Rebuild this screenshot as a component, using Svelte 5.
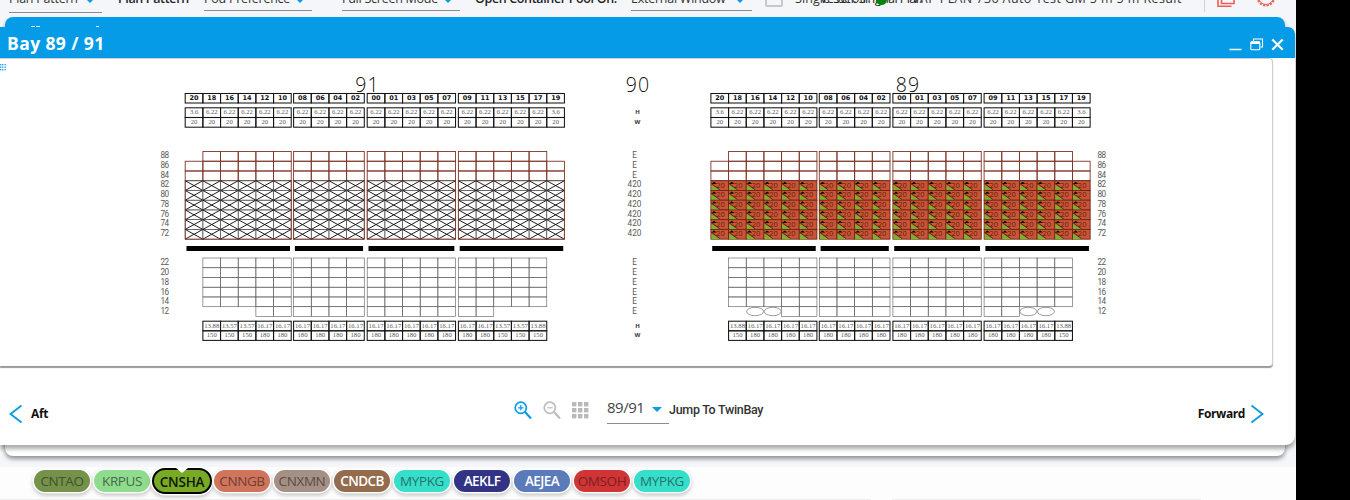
<script>
  const groups = [
    { x: 185.2, names: ['20', '18', '16', '14', '12', '10'] },
    { x: 293.6, names: ['08', '06', '04', '02'] },
    { x: 367.2, names: ['00', '01', '03', '05', '07'] },
    { x: 458.4, names: ['09', '11', '13', '15', '17', '19'] }
  ];
  const CW = 17.67;
  const RH = 9.74;
  const TOP = 151.5;
  const LOW = 258;
  const cols = groups.flatMap((g) => g.names.map((name, i) => ({ name, x: g.x + i * CW })));
  const inner = cols.slice(1, 20);
  const range = (n) => Array.from({ length: n }, (_, i) => i);
  const upper = ['88', '86', '84', '82', '80', '78', '76', '74', '72'];
  const lower = ['22', '20', '18', '16', '14', '12'];

  const bays = [
    { dx: 0, title: '91', tx: 367, loaded: false, first: 4, last: 16, round: [], light: [1, 2, 3, 17, 18, 19], mid: '13.57' },
    { dx: 525.7, title: '89', tx: 907.5, loaded: true, first: 2, last: 18, round: [2, 3, 17, 18], light: [1, 19], mid: '16.17' }
  ];
  const limit = (bay, i) => (i === 1 || i === 19 ? '13.88' : bay.light.includes(i) ? bay.mid : '16.17');

  const ports = [
    { code: 'CNTAO', bg: '#74924a', fg: '#42502f' },
    { code: 'KRPUS', bg: '#90dc8e', fg: '#456a48' },
    { code: 'CNSHA', bg: '#78aa25', fg: '#10180a', active: true },
    { code: 'CNNGB', bg: '#d0745b', fg: '#713e35' },
    { code: 'CNXMN', bg: '#a49085', fg: '#5a4b46' },
    { code: 'CNDCB', bg: '#956b4d', fg: '#ffffff', strong: true },
    { code: 'MYPKG', bg: '#36dfc9', fg: '#28736c' },
    { code: 'AEKLF', bg: '#333386', fg: '#ffffff', strong: true },
    { code: 'AEJEA', bg: '#5b7aba', fg: '#ffffff', strong: true },
    { code: 'OMSOH', bg: '#d03434', fg: '#7b2024' },
    { code: 'MYPKG', bg: '#36dfc9', fg: '#28736c' }
  ];
</script>

<div class="screen">
  <header class="toolbar">
    <div class="select low" style:width="93px"><span style:width="70px">Plan Pattern</span><i></i></div>
    <b style:width="86px">Plan Pattern</b>
    <div class="select" style:width="108px"><span>Pod Preference</span><i></i></div>
    <div class="select wide" style:width="118px"><span>Full Screen Mode</span><i></i></div>
    <b class="pool" style:width="156px">Open Container Pool On:</b>
    <div class="select" style:width="121px"><span>External Window</span><i></i></div>
    <div class="box"></div>
    <div class="single">Single Scroll
      <span class="over">Vessel: Singhal Plan</span>
      <em></em>
    </div>
    <div class="result">VAP PLAN 736 Auto Test GM 5 m 5 m Result</div>
    <div class="rule"></div>
    <svg class="red" width="70" height="14" viewBox="1212 0 70 14">
      <path d="M1221.500 -6V3.500H1234V-6M1218 -3V6.300H1231.500" />
      <circle cx="1266" cy="-3" r="8.500" stroke-dasharray="2.200 1.300" stroke-width="2" />
      <path d="M1258.500 -3a7.500 7.500 0 0 0 15 0" stroke-width="1" />
    </svg>
  </header>

  <div class="ports">
    {#each ports as p}
      <div class="port" class:active={p.active} class:strong={p.strong} style:background={p.bg} style:color={p.fg}>{p.code}</div>
    {/each}
  </div>
  <div class="panels"><div></div><div></div></div>

  <section class="window back"><div class="bar"><i></i><i></i></div></section>

  <section class="window front">
    <div class="bar">
      <h1>Bay 89 / 91</h1>
      <svg width="56" height="18" viewBox="1228 36 56 18" fill="none" stroke="#fff">
        <path d="M1229.500 49.500H1241.500" stroke-width="1.500" />
        <path d="M1253.500 41V39H1262.500V47H1260.500" stroke-width="1.100" />
        <rect x="1250.800" y="41.800" width="9" height="8" rx="1" stroke-width="1.100" />
        <path d="M1250.800 42.800h9" stroke-width="2.400" />
        <path d="M1272.300 39.500L1282.700 49.700M1282.700 39.500L1272.300 49.700" stroke-width="2.200" />
      </svg>
    </div>
    <div class="card">
      <svg width="1273" height="308" viewBox="0 58 1273 308">
        <g fill="#2aa5e8">
          {#each [0, 2, 4.500] as x}{#each [64, 66.500, 69] as y}<rect {x} {y} width="1.400" height="1.400" />{/each}{/each}
        </g>
        <text class="big" x="637.500" y="91.500" textLength="23.500">90</text>
        {#each upper as label, r}
          <text class="lab" x="164.700" y={158.200 + r * RH} textLength="8.600">{label}</text>
          <text class="lab" x="1101.700" y={158.200 + r * RH} textLength="8.600">{label}</text>
          <text class="lab" x="634.500" y={158.200 + r * RH}>{r < 3 ? 'E' : '420'}</text>
        {/each}
        {#each lower as label, r}
          <text class="lab" x="164.700" y={265.300 + r * RH} textLength="8.600">{label}</text>
          <text class="lab" x="1101.700" y={265.300 + r * RH} textLength="8.600">{label}</text>
          <text class="lab" x="634.500" y={265.300 + r * RH}>E</text>
        {/each}
        <text class="hw" x="637.500" y="114.200">H</text>
        <text class="hw" x="637.500" y="124.200">W</text>
        <text class="hw" x="637.500" y="328.200">H</text>
        <text class="hw" x="637.500" y="337.200">W</text>

        {#each bays as bay}
          <text class="big" x={bay.tx} y="91.500" textLength="23.500">{bay.title}</text>
          <g transform="translate({bay.dx} 0)">
            {#each groups as g}
              <rect x={g.x + 1.300} y="246" width={g.names.length * CW - 2.500} height="5" />
            {/each}
            {#each cols as c, i}
              <rect class="tab" x={c.x} y="93.500" width={CW} height="9.500" />
              <text class="name" x={c.x + 8.900} y="100.200">{c.name}</text>
              <rect class="tab" x={c.x} y="107.800" width={CW} height="9.700" />
              <rect class="tab" x={c.x} y="117.500" width={CW} height="9.700" />
              <text class="num" x={c.x + 8.900} y="114.200">{i === 0 || i === 20 ? '3.6' : '6.22'}</text>
              <text class="num" x={c.x + 8.900} y="124.100">20</text>
              {#each range(9) as r}
                {#if r > 0 || (i > 0 && i < 20)}
                  {@const y = TOP + r * RH}
                  {#if r < 3}
                    <rect class="slot" x={c.x} {y} width={CW} height={RH} />
                  {:else if bay.loaded}
                    <rect class="cargo" x={c.x} {y} width={CW} height={RH} />
                    <path d="M{c.x + 0.500} {y + 4.300}V{y + RH}H{c.x + 9.500}Z" fill="#7cb22b" />
                    <path d="M{c.x + 0.300} {y + 2.700}L{c.x + 9} {y + 9.200}" stroke="#1d1a0c" stroke-width=".7" />
                    <path d="M{c.x + 0.800} {y + 3.200}L{c.x + 3} {y + 1.100}L{c.x + 6} {y + 3.100}Z" />
                    <text class="size" x={c.x + 9.700} y={y + 6.900}>20</text>
                  {:else}
                    <rect class="cross" x={c.x} {y} width={CW} height={RH} />
                    <path class="cross heavy" d="M{c.x} {y}l{CW} {RH}m0 -{RH}l-{CW} {RH}" />
                  {/if}
                {/if}
              {/each}
            {/each}
            {#if !bay.loaded}
              {#each groups as g}
                <path class="slot" d="M{g.x} 180.700V239.200H{g.x + g.names.length * CW}V180.700" />
              {/each}
            {/if}
            {#each inner as c, k}
              {@const i = k + 1}
              {#each range(5) as r}
                <rect class="hold" x={c.x} y={LOW + r * RH} width={CW} height={RH} />
              {/each}
              {#if bay.round.includes(i)}
                <ellipse class="hold" cx={c.x + CW / 2} cy="311.500" rx="8.500" ry="4.200" />
              {:else if i >= bay.first && i <= bay.last}
                <rect class="hold" x={c.x} y={LOW + 5 * RH} width={CW} height={RH} />
              {/if}
              <rect class="tab" x={c.x} y="321.200" width={CW} height="9.600" />
              <rect class="tab" x={c.x} y="330.800" width={CW} height="9.600" />
              <text class="num" x={c.x + 8.900} y="328.100">{limit(bay, i)}</text>
              <text class="num" x={c.x + 8.900} y="337.200">{bay.light.includes(i) ? '150' : '180'}</text>
            {/each}
          </g>
        {/each}
      </svg>
    </div>
    <footer>
      <div class="step aft">
        <svg width="14" height="20" viewBox="0 0 14 20"><path d="M12.500 1.500L1.500 10L12.500 18.500" /></svg>
        <span>Aft</span>
      </div>
      <div class="tools">
        <svg width="18" height="19" viewBox="0 0 18 19" fill="none" stroke="#0a9be6" stroke-width="1.700"><circle cx="6.800" cy="6.800" r="5.600" /><path d="M11 11L17 17.500" stroke-width="2.200" /><path d="M4 6.800H9.600M6.800 4V9.600" stroke-width="1.200" /></svg>
        <svg width="18" height="19" viewBox="0 0 18 19" fill="none" stroke="#bdbdbd" stroke-width="1.700"><circle cx="6.800" cy="6.800" r="5.600" /><path d="M11 11L17 17.500" stroke-width="2.200" /><path d="M4 6.800H9.600" stroke-width="1.200" /></svg>
        <svg width="17" height="17" viewBox="0 0 17 17" fill="#b9b9b9">{#each [0, 6, 12] as x}{#each [0, 6, 12] as y}<rect {x} {y} width="4.400" height="4.400" />{/each}{/each}</svg>
      </div>
      <div class="pick"><span>89/91</span><i></i></div>
      <div class="jump">Jump To TwinBay</div>
      <div class="step fwd">
        <span>Forward</span>
        <svg width="14" height="20" viewBox="0 0 14 20"><path d="M1.500 1.500L12.500 10L1.500 18.500" /></svg>
      </div>
    </footer>
  </section>
</div>

<style>
  :global(body) { background: #000; overflow: hidden; }
  .screen { position: relative; width: 1296px; height: 500px; background: #f5f6f9; overflow: hidden; font-family: "Open Sans", "Noto Sans", sans-serif; }

  .toolbar { height: 13px; display: flex; align-items: flex-start; padding-left: 9px; font-size: 12.500px; line-height: 18px; color: #333; white-space: nowrap; overflow: hidden; }
  .toolbar span, .toolbar b { margin-top: -10px; }
  .toolbar b { margin-left: 16px; font-weight: 600; color: #222; box-sizing: border-box; letter-spacing: -.35px; }
  .toolbar b.pool { margin-left: 15px; font-size: 12.500px; letter-spacing: -.35px; }
  .select { height: 10px; border-bottom: 1px solid #8c8c8c; display: flex; justify-content: space-between; flex: none; letter-spacing: -.25px; }
  .select.low { height: 12px; }
  .select.wide { margin-left: 30px; }
  .select i, .pick i { width: 0; height: 0; border: 5px solid transparent; border-top-color: #0a9be6; border-bottom: 0; }
  .select i { margin: -2px 7px 0 0; }
  .box { width: 14px; height: 14px; border: 2px solid #c8c8c8; border-radius: 2px; margin: -11px 12px 0 13px; flex: none; }
  .single { position: relative; width: 117px; margin-top: -10px; flex: none; letter-spacing: .1px; }
  .toolbar .over { position: absolute; left: 25px; top: 0; margin: 0; color: #222; letter-spacing: -.55px; }
  .single em { position: absolute; left: 81px; top: 4px; width: 11px; height: 11px; border-radius: 50%; background: #078407; }
  .result { width: 279px; margin-top: -10px; flex: none; letter-spacing: .4px; }
  .rule { width: 1px; height: 12px; background: #cfd1d4; margin: 0 7px 0 13px; }
  .red { fill: none; stroke: #ef5e55; stroke-width: 1.600; flex: none; }

  .ports { position: absolute; left: 0; right: 0; top: 467px; bottom: 0; background: #fdfdfd; display: flex; align-items: flex-start; gap: 4px; padding: 3px 0 0 34px; }
  .port { box-sizing: content-box; width: 56px; height: 22px; border-radius: 11px; font-size: 13.500px; line-height: 23px; text-align: center; letter-spacing: -.4px; box-shadow: 0 0 0 1.500px #fff, 0 2px 4px 1px #0004; position: relative; white-space: nowrap; }
  .port.strong { font-weight: 600; letter-spacing: -.6px; }
  .port.active { border: 2px solid #000; margin: -2px; font-weight: 600; border-radius: 13px; letter-spacing: -.2px; line-height: 25px; }
  .port.active::before { content: ""; position: absolute; left: 22px; top: -2px; border: 6px solid transparent; border-top: 5px solid #fff; border-bottom: 0; }
  .panels { position: absolute; left: 0; top: 499px; display: flex; gap: 21px; }
  .panels div { width: 871px; height: 1px; background: #efefef; }
  .panels div + div { width: 309px; }

  .window { position: absolute; background: #fff; }
  .window .bar { background: #059be7; }
  .back { left: 5px; top: 17px; width: 1280px; height: 439px; border-radius: 8px; box-shadow: 0 3px 4px #0006; }
  .back .bar { height: 20px; border-radius: 8px 8px 0 0; display: flex; gap: 56px; padding-left: 26px; }
  .back i { width: 9px; height: 1px; margin-top: 9px; background: repeating-linear-gradient(90deg, #e7f5fd 0 4px, #059be7 4px 5px); }
  .back i + i { width: 3px; }
  .front { left: 0; top: 27px; width: 1295px; height: 418px; border-radius: 0 7px 9px 0; box-shadow: 0 4px 4px #0005; }
  .front .bar { height: 31px; border-radius: 0 7px 0 0; display: flex; justify-content: space-between; align-items: center; padding: 0 11px 0 7px; box-sizing: border-box; }
  h1 { margin: 1px 0 0; font-size: 17.500px; line-height: 24px; font-weight: 700; color: #fff; letter-spacing: .4px; }
  .bar svg { margin-top: 4px; }
  .card { width: 1272px; height: 307px; border: solid #cfcfcf; border-width: 1px 1px 0 0; box-sizing: content-box; border-radius: 0 4px 4px 0; box-shadow: 0 1.500px 1px #999; position: relative; }
  .card svg { display: block; margin-top: -1px; }

  text { text-anchor: middle; }
  .big { font: 300 19.500px "Open Sans", sans-serif; fill: #111; }
  .lab { font: 400 8.200px Roboto, sans-serif; fill: #5a5a5a; }
  .hw { font: 700 6px "Noto Sans", sans-serif; fill: #333; }
  .name { font: 700 6.500px "DejaVu Sans", sans-serif; fill: #111; }
  .num { font: 6.700px "Liberation Serif", serif; fill: #5a5a5a; }
  .size { font: 7.500px "Open Sans", sans-serif; fill: #5e2010; text-anchor: middle; }
  .tab { fill: none; stroke: #151515; stroke-width: 1.050; }
  .slot { fill: none; stroke: #7f3528; stroke-width: .9; }
  .cross { fill: none; stroke: #555; stroke-width: .65; }
  .heavy { stroke: #111; stroke-width: .95; }
  .cargo { fill: #cb5436; stroke: #6c2515; stroke-width: .9; }
  .hold { fill: none; stroke: #666; stroke-width: .65; }

  footer { height: 79px; display: flex; align-items: center; padding: 0 31px 0 9px; box-sizing: border-box; }
  .step { display: flex; align-items: center; gap: 8px; margin-top: 16px; font-size: 12px; font-weight: 700; color: #111; letter-spacing: -.4px; }
  .step svg { fill: none; stroke: #0a9be6; stroke-width: 1.900; }
  .aft { width: 505px; }
  .fwd { margin-left: auto; gap: 5px; }
  .tools { width: 93px; display: flex; align-items: center; gap: 11px; margin-top: 9px; }
  .pick { width: 62px; height: 26px; border-bottom: 1px solid #8c8c8c; display: flex; justify-content: space-between; margin-top: 11px; font-size: 15px; line-height: 18px; color: #444; letter-spacing: -.5px; box-sizing: border-box; }
  .pick i { margin: 9px 7px 0 0; }
  .jump { font: 500 12.500px Roboto, sans-serif; color: #333; margin-top: 8px; letter-spacing: -.3px; }
</style>
